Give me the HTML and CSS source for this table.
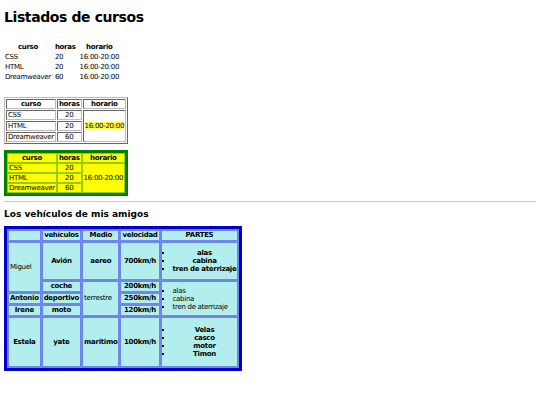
FILE: index.html
```html
<!DOCTYPE html>
<html lang="es">
<head>
<meta charset="utf-8">
<title>Listados de cursos</title>
<link rel="stylesheet" href="styles.css">
</head>
<body>
<h1 class="title">Listados de cursos</h1>

<table class="plain">
  <tr><th>curso</th><th>horas</th><th>horario</th></tr>
  <tr><td>CSS</td><td>20</td><td>16:00-20:00</td></tr>
  <tr><td>HTML</td><td>20</td><td>16:00-20:00</td></tr>
  <tr><td>Dreamweaver</td><td>60</td><td>16:00-20:00</td></tr>
</table>

<table class="bordered">
  <tr><th>curso</th><th>horas</th><th>horario</th></tr>
  <tr><td>CSS</td><td class="num">20</td><td rowspan="3" class="mid"><span class="hl">16:00-20:00</span></td></tr>
  <tr><td>HTML</td><td class="num">20</td></tr>
  <tr><td>Dreamweaver</td><td class="num">60</td></tr>
</table>

<table class="green">
  <tr><th>curso</th><th>horas</th><th>horario</th></tr>
  <tr><td>CSS</td><td class="num">20</td><td rowspan="3" class="mid">16:00-20:00</td></tr>
  <tr><td>HTML</td><td class="num">20</td></tr>
  <tr><td>Dreamweaver</td><td class="num">60</td></tr>
</table>

<hr class="sep">

<h3 class="subtitle">Los vehículos de mis amigos</h3>

<table class="blue">
  <tr><th></th><th>vehículos</th><th>Medio</th><th>velocidad</th><th>PARTES</th></tr>
  <tr>
    <td rowspan="2" class="left">Miguel</td>
    <th>Avión</th><th>aereo</th><th>700km/h</th>
    <th><ul class="parts"><li>alas</li><li>cabina</li><li>tren de aterrizaje</li></ul></th>
  </tr>
  <tr>
    <th>coche</th>
    <td rowspan="3" class="left">terrestre</td>
    <th>200km/h</th>
    <td rowspan="3" class="left"><ul class="parts plainlist"><li>alas</li><li>cabina</li><li>tren de aterrizaje</li></ul></td>
  </tr>
  <tr><th>Antonio</th><th>deportivo</th><th>250km/h</th></tr>
  <tr><th>Irene</th><th>moto</th><th>120km/h</th></tr>
  <tr>
    <th>Estela</th><th>yate</th><th>maritimo</th><th>100km/h</th>
    <th><ul class="parts big"><li>Velas</li><li>casco</li><li>motor</li><li>Timon</li></ul></th>
  </tr>
</table>
</body>
</html>
```

FILE: styles.css
```css
body {
  margin: 4px;
  font-family: "DejaVu Sans", Verdana, sans-serif;
  font-size: 7px;
  color: #000;
  background: #fff;
}

.title {
  font-size: 14px;
  letter-spacing: -0.4px;
  font-weight: bold;
  margin: 5px 0 16px 0;
  line-height: 17px;
}

table {
  font-size: 7px;
  line-height: 8px;
  letter-spacing: -0.3px;
}

th, td {
  padding: 0 1px;
}

.plain {
  border-spacing: 2px 0;
  margin-left: -2px;
  margin-bottom: 15px;
}

.plain th, .plain td {
  padding: 1px 1px;
}

.bordered {
  border: 1px outset #bbb;
  border-spacing: 1px;
  margin-bottom: 6px;
}

.bordered th, .bordered td {
  border: 1px inset #bbb;
  padding: 0 1px;
}

.num { text-align: center; }
.mid { text-align: center; vertical-align: middle; }

.hl { background: #ffff44; }

.green {
  border: 3px solid #008000;
  border-spacing: 0;
  background: #ffff00;
  margin-bottom: 5px;
}

.green th, .green td {
  border: 1px solid #99cc00;
  background: #ffff00;
  padding: 0 1px;
}

.sep {
  border: 0;
  border-top: 1px solid #ccc;
  margin: 0 0 7px 0;
}

.subtitle {
  font-size: 9px;
  line-height: 11px;
  font-weight: bold;
  margin: 0 0 6px 0;
}

.blue {
  border: 3px solid #0000cc;
  border-spacing: 1px;
  background: #6f86ec;
  line-height: 9px;
}

.blue th, .blue td {
  background: #b2eeee;
  border: 1px solid #6f86ec;
  padding: 0 1px;
  vertical-align: middle;
}

.blue td.left { text-align: left; }

.parts {
  margin: 6px 0;
  padding-left: 10px;
  text-align: center;
  list-style: square;
  line-height: 8px;
}

.parts.big {
  margin: 8px 0;
}

.plainlist {
  text-align: left;
  margin: 2px 0;
}
```
